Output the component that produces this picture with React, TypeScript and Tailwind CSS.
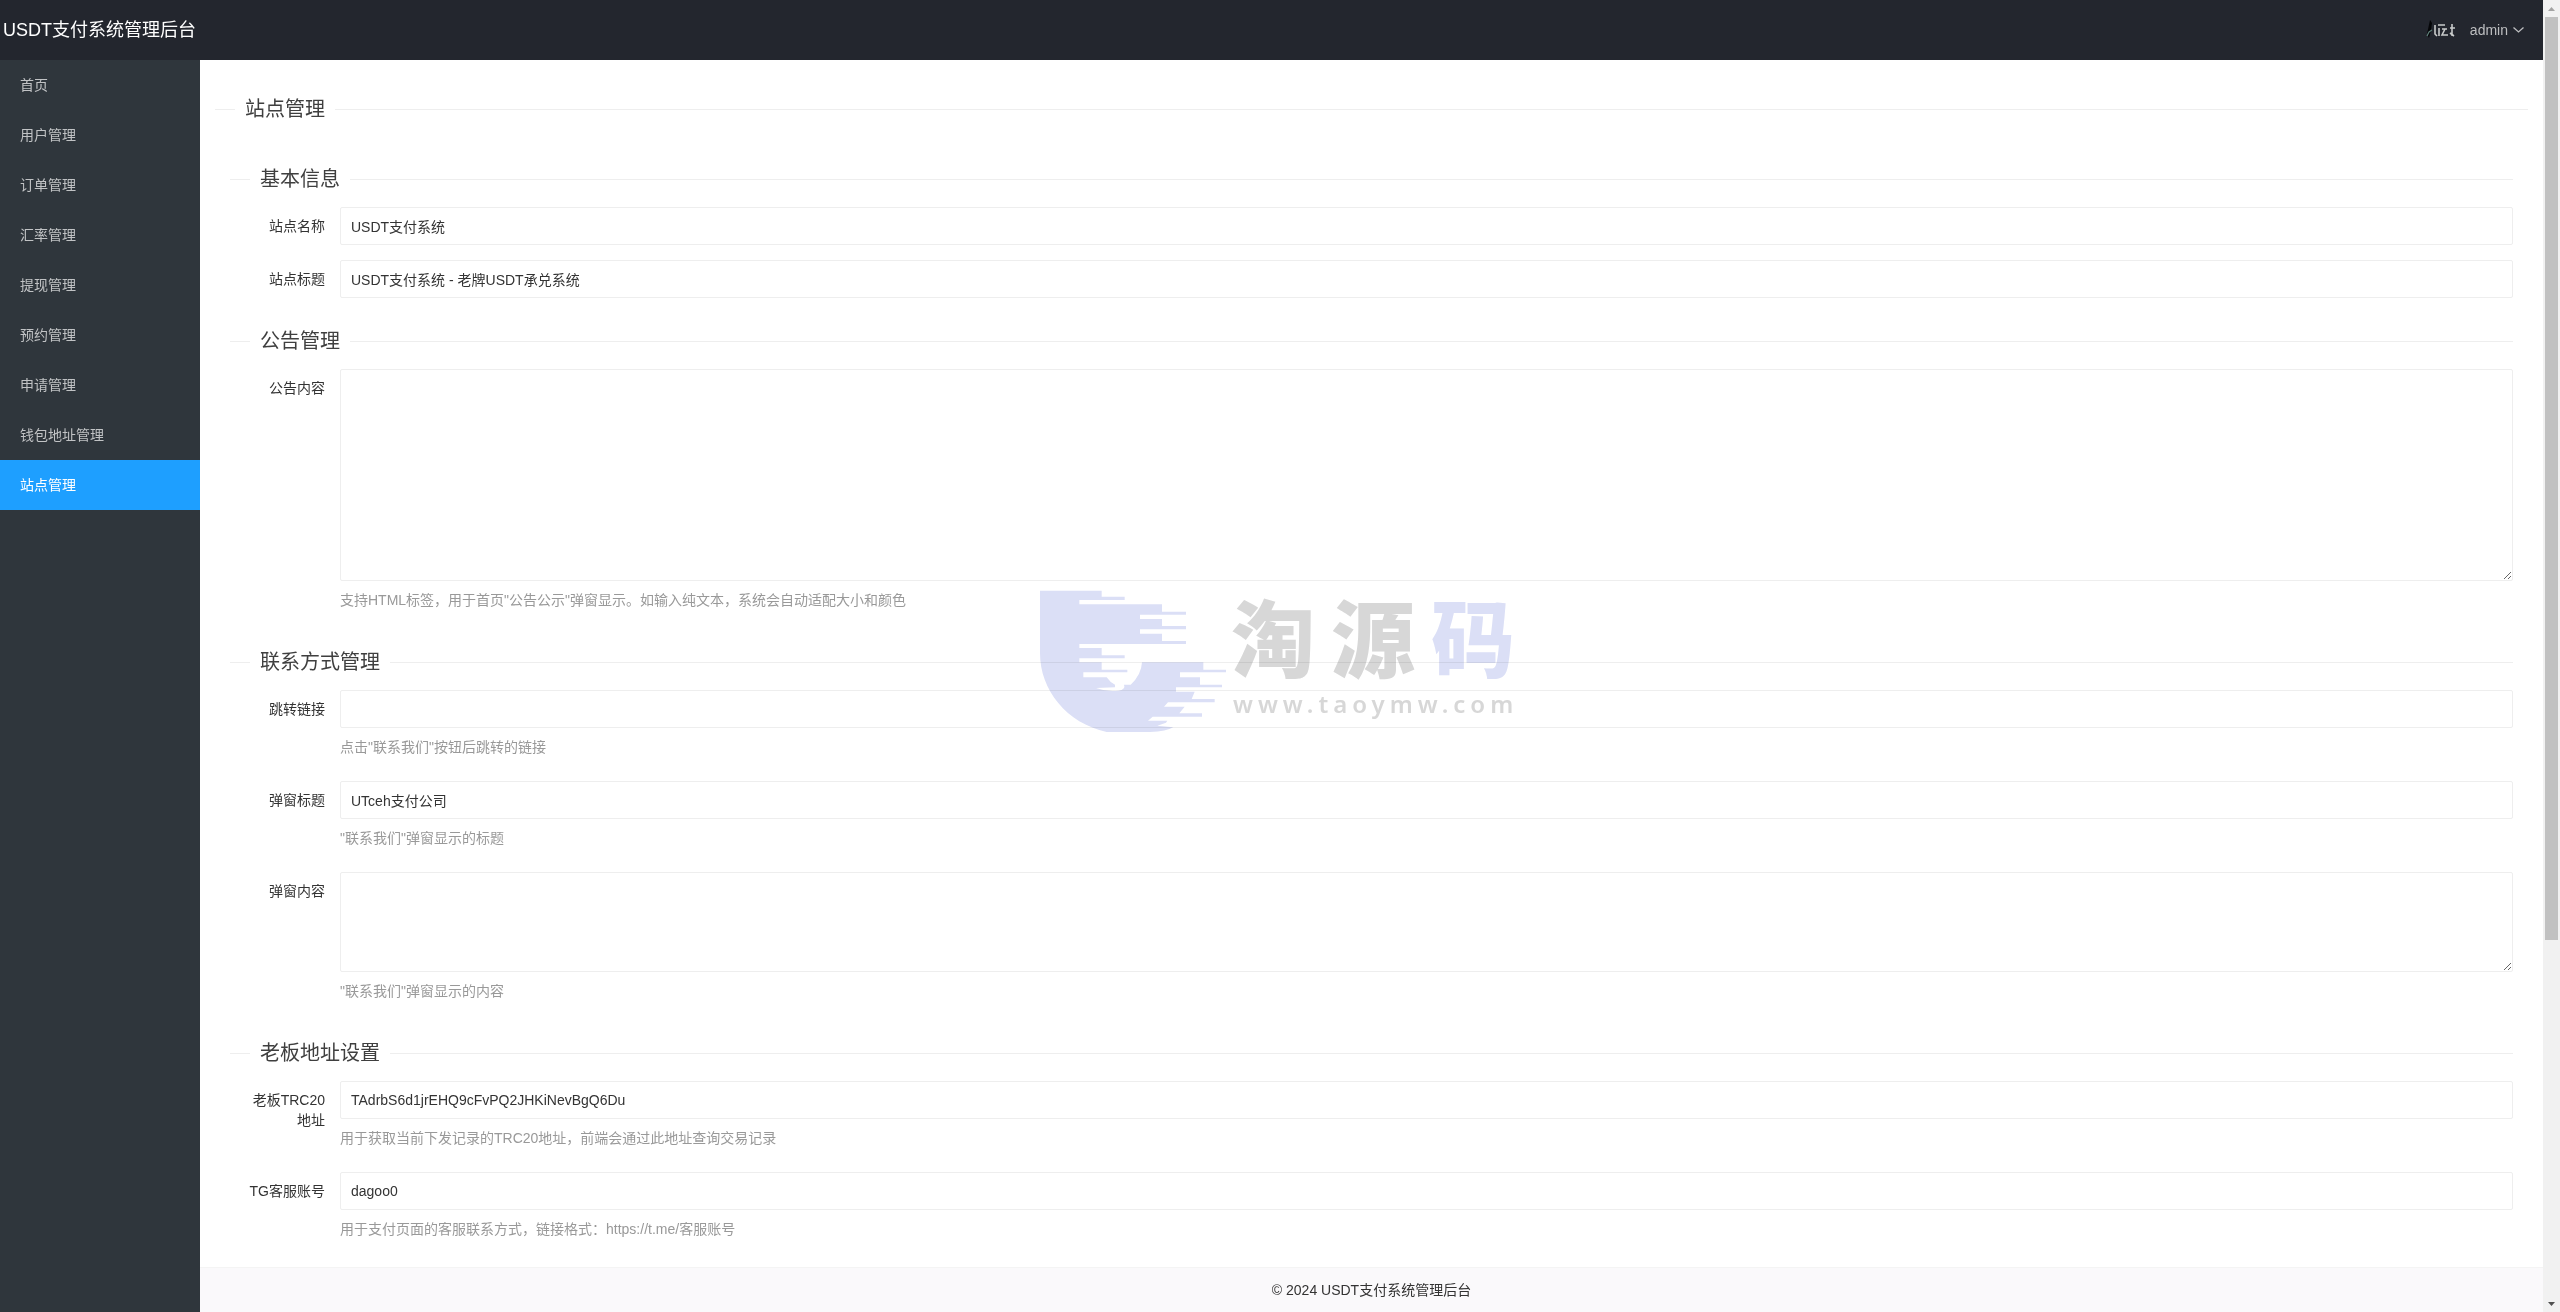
import type { ReactNode } from "react";

const menu = ["首页", "用户管理", "订单管理", "汇率管理", "提现管理", "预约管理", "申请管理", "钱包地址管理", "站点管理"];

function Section({ title, children }: { title: string; children: ReactNode }) {
  return (
    <section>
      <SectionTitle title={title} />
      <div className="mt-[15px]">{children}</div>
    </section>
  );
}

function SectionTitle({ title }: { title: string }) {
  return (
    <div className="flex h-[26px] items-center">
      <span className="h-px w-5 bg-[#eeeeee]" />
      <h2 className="px-[10px] text-[20px] leading-[26px] text-[#3f3f3f]">{title}</h2>
      <span className="h-px flex-1 bg-[#eeeeee]" />
    </div>
  );
}

type FieldProps = {
  id: string;
  label: string;
  value?: string;
  hint?: string;
  area?: string;
};

function Field({ id, label, value = "", hint, area }: FieldProps) {
  return (
    <div className="mb-[15px] flex items-start">
      <label htmlFor={id} className="w-[110px] shrink-0 px-[15px] py-[9px] text-right leading-5 text-[#333333]">
        {label}
      </label>
      <div className="min-w-0 flex-1">
        {area ? (
          <textarea
            id={id}
            defaultValue={value}
            className={`block w-full resize-y rounded-[2px] border border-[#eeeeee] bg-white px-[10px] py-[6px] leading-5 outline-none ${area}`}
          />
        ) : (
          <input
            id={id}
            type="text"
            defaultValue={value}
            className="block h-[38px] w-full rounded-[2px] border border-[#eeeeee] bg-white pl-[10px] leading-5 text-[#333333] outline-none"
          />
        )}
        {hint && <p className="py-[9px] leading-5 text-[#999999]">{hint}</p>}
      </div>
    </div>
  );
}

function Watermark() {
  return (
    <div className="pointer-events-none absolute top-[590px] left-1/2 flex -translate-x-[240px] items-start mix-blend-multiply" aria-hidden="true">
      <svg width="188" height="142" viewBox="0 0 564 426" fill="#dbdff6">
        <path d="M0 2H185V20H254V30H118V43H366V65H438V74H300V87H366V108H438V118H300V131H366V153H438V162H118V174H185V196H254V205H118V217H185V239H262V247H130V262H200Q210 277 225 284L225 292L168 294Q200 306 235 302Q258 298 252 284H272Q304 255 306 217H490V239H558V247H420V262H480V284H546V292H408V305H464L455 327H524V337H384L372 350H434L418 370H486V380H338L324 392H382L378 398L352 407L400 412Q380 424 330 426H200C80 400 0 300 0 190Z" />
      </svg>
      <div className="pt-2">
        <div className="flex gap-4 pl-[3px] text-[84px] leading-[88px] font-black text-[#d7d7d7]">
          <span>淘</span>
          <span>源</span>
          <span className="text-[#dbdff6]">码</span>
        </div>
        <div className="pl-[5px] font-['Noto_Sans'] text-[24px] leading-[36px] font-semibold tracking-[5px] text-[#d7d7d7]">www.taoymw.com</div>
      </div>
    </div>
  );
}

export default function App() {
  return (
    <div className="relative flex h-screen overflow-hidden bg-white font-['Liberation_Sans','Noto_Sans_CJK_SC',sans-serif] text-[14px] text-[#333333]">
      <div className="flex min-w-0 flex-1 flex-col">
        <header className="flex h-[60px] shrink-0 items-center justify-between bg-[#23262e] pr-[19px] pl-[3px]">
          <h1 className="text-[18px] text-white">USDT支付系统管理后台</h1>
          <button type="button" className="flex items-center text-[#bdbec0]">
            <svg width="30" height="20" viewBox="0 0 30 20" className="mr-[14px]" fill="none">
              <path d="M4 0L6 3L5 10L3 18L1 14Z" fill="#050608" />
              <path d="M1 16L3 12L6 10" stroke="#5f7f7a" strokeWidth="1.2" />
              <path d="M9 5V14L11 16M13 8V16M12 5H19M16 9H21M19 9L16 15H22M26 4V16M24 8H29M24 13L28 16" stroke="#c9cbcb" strokeWidth="1.6" />
            </svg>
            <span>admin</span>
            <svg width="11" height="6" viewBox="0 0 11 6" className="ml-[5px]" fill="none" stroke="currentColor" strokeWidth="1.3">
              <path d="M0.5 0.5L5.5 5L10.5 0.5" />
            </svg>
          </button>
        </header>
        <div className="flex min-h-0 flex-1">
          <nav className="w-[200px] shrink-0 bg-[#2f363c]">
            {menu.map((m) => (
              <a
                key={m}
                href="#"
                className={`block h-[50px] px-5 leading-[50px] ${m === "站点管理" ? "bg-[#1e9fff] text-white" : "text-[#c1c3c5]"}`}
              >
                {m}
              </a>
            ))}
          </nav>
          <div className="flex min-w-0 flex-1 flex-col">
            <main className="min-h-0 flex-1 overflow-hidden px-[15px] pt-[36px]">
              <SectionTitle title="站点管理" />
              <form className="flex flex-col gap-[15px] px-[15px] pt-[44px]">
                <Section title="基本信息">
                  <Field id="site-name" label="站点名称" value="USDT支付系统" />
                  <Field id="site-title" label="站点标题" value="USDT支付系统 - 老牌USDT承兑系统" />
                </Section>
                <Section title="公告管理">
                  <Field id="notice" label="公告内容" area="h-[212px]" hint={'支持HTML标签，用于首页"公告公示"弹窗显示。如输入纯文本，系统会自动适配大小和颜色'} />
                </Section>
                <Section title="联系方式管理">
                  <Field id="link" label="跳转链接" hint={'点击"联系我们"按钮后跳转的链接'} />
                  <Field id="popup-title" label="弹窗标题" value="UTceh支付公司" hint={'"联系我们"弹窗显示的标题'} />
                  <Field id="popup-content" label="弹窗内容" area="h-[100px]" hint={'"联系我们"弹窗显示的内容'} />
                </Section>
                <Section title="老板地址设置">
                  <Field id="trc20" label="老板TRC20地址" value="TAdrbS6d1jrEHQ9cFvPQ2JHKiNevBgQ6Du" hint="用于获取当前下发记录的TRC20地址，前端会通过此地址查询交易记录" />
                  <Field id="tg" label="TG客服账号" value="dagoo0" hint="用于支付页面的客服联系方式，链接格式：https://t.me/客服账号" />
                </Section>
              </form>
            </main>
            <footer className="h-[45px] shrink-0 border-t border-[#f4f4f4] bg-[#faf9fb] text-center leading-[44px]">© 2024 USDT支付系统管理后台</footer>
          </div>
        </div>
      </div>
      <div className="flex w-[17px] shrink-0 flex-col items-center bg-[#f1f1f1]" aria-hidden="true">
        <svg width="17" height="17" viewBox="0 0 17 17">
          <path d="M5 11L8.5 7L12 11Z" fill="#a3a3a3" />
        </svg>
        <div className="w-[13px] flex-[13] bg-[#c1c1c1]" />
        <div className="flex-[5]" />
        <svg width="17" height="17" viewBox="0 0 17 17">
          <path d="M5 7L8.5 11L12 7Z" fill="#505050" />
        </svg>
      </div>
      <Watermark />
    </div>
  );
}
